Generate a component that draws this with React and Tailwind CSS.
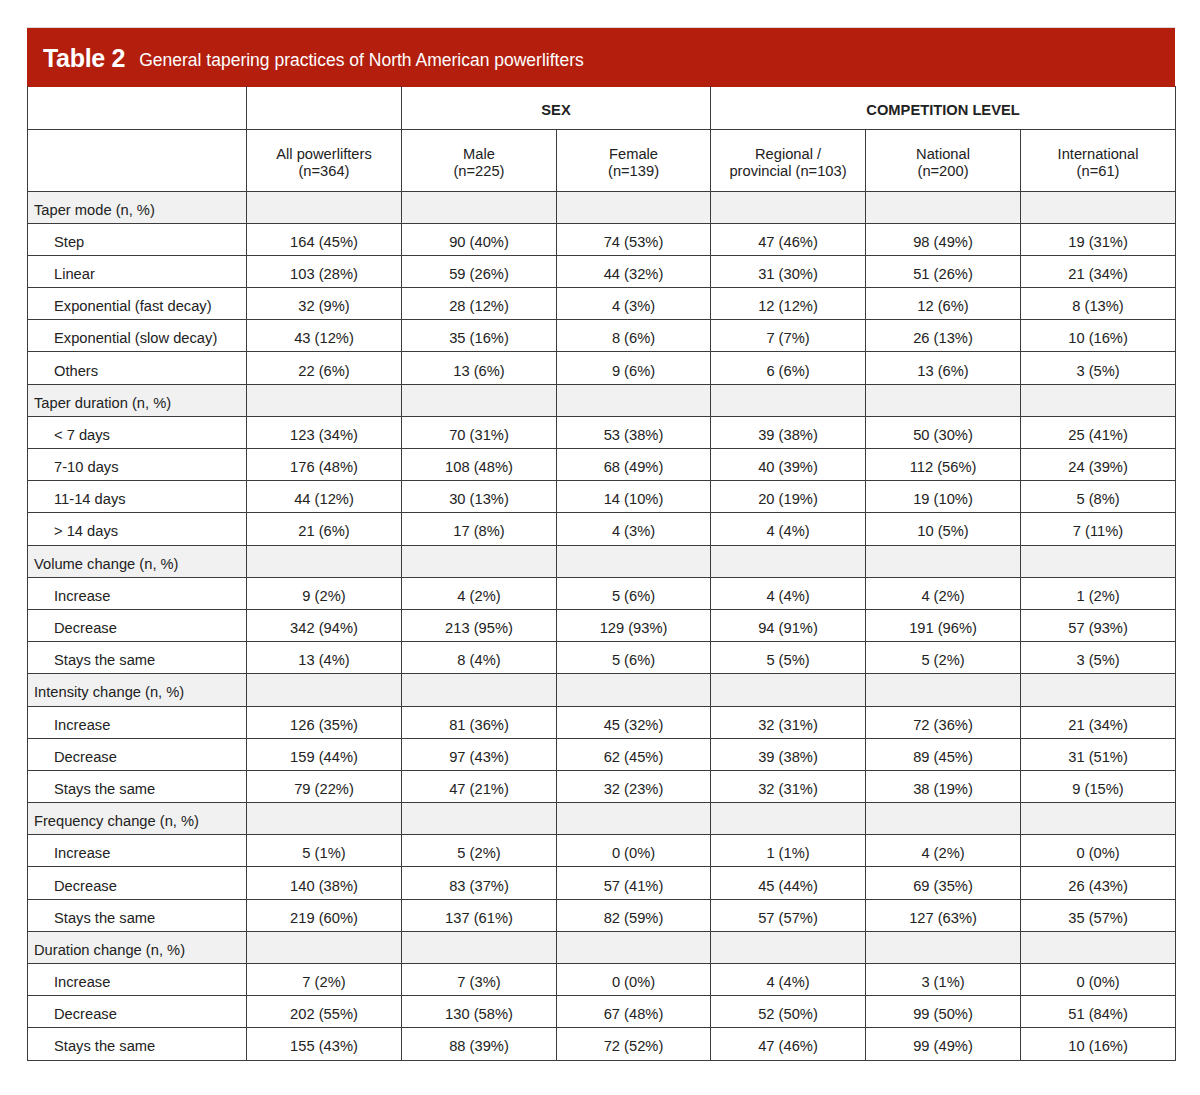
const groups = [
  {
    title: 'Taper mode (n, %)',
    rows: [
      ['Step', '164 (45%)', '90 (40%)', '74 (53%)', '47 (46%)', '98 (49%)', '19 (31%)'],
      ['Linear', '103 (28%)', '59 (26%)', '44 (32%)', '31 (30%)', '51 (26%)', '21 (34%)'],
      ['Exponential (fast decay)', '32 (9%)', '28 (12%)', '4 (3%)', '12 (12%)', '12 (6%)', '8 (13%)'],
      ['Exponential (slow decay)', '43 (12%)', '35 (16%)', '8 (6%)', '7 (7%)', '26 (13%)', '10 (16%)'],
      ['Others', '22 (6%)', '13 (6%)', '9 (6%)', '6 (6%)', '13 (6%)', '3 (5%)'],
    ],
  },
  {
    title: 'Taper duration (n, %)',
    rows: [
      ['< 7 days', '123 (34%)', '70 (31%)', '53 (38%)', '39 (38%)', '50 (30%)', '25 (41%)'],
      ['7-10 days', '176 (48%)', '108 (48%)', '68 (49%)', '40 (39%)', '112 (56%)', '24 (39%)'],
      ['11-14 days', '44 (12%)', '30 (13%)', '14 (10%)', '20 (19%)', '19 (10%)', '5 (8%)'],
      ['> 14 days', '21 (6%)', '17 (8%)', '4 (3%)', '4 (4%)', '10 (5%)', '7 (11%)'],
    ],
  },
  {
    title: 'Volume change (n, %)',
    rows: [
      ['Increase', '9 (2%)', '4 (2%)', '5 (6%)', '4 (4%)', '4 (2%)', '1 (2%)'],
      ['Decrease', '342 (94%)', '213 (95%)', '129 (93%)', '94 (91%)', '191 (96%)', '57 (93%)'],
      ['Stays the same', '13 (4%)', '8 (4%)', '5 (6%)', '5 (5%)', '5 (2%)', '3 (5%)'],
    ],
  },
  {
    title: 'Intensity change (n, %)',
    rows: [
      ['Increase', '126 (35%)', '81 (36%)', '45 (32%)', '32 (31%)', '72 (36%)', '21 (34%)'],
      ['Decrease', '159 (44%)', '97 (43%)', '62 (45%)', '39 (38%)', '89 (45%)', '31 (51%)'],
      ['Stays the same', '79 (22%)', '47 (21%)', '32 (23%)', '32 (31%)', '38 (19%)', '9 (15%)'],
    ],
  },
  {
    title: 'Frequency change (n, %)',
    rows: [
      ['Increase', '5 (1%)', '5 (2%)', '0 (0%)', '1 (1%)', '4 (2%)', '0 (0%)'],
      ['Decrease', '140 (38%)', '83 (37%)', '57 (41%)', '45 (44%)', '69 (35%)', '26 (43%)'],
      ['Stays the same', '219 (60%)', '137 (61%)', '82 (59%)', '57 (57%)', '127 (63%)', '35 (57%)'],
    ],
  },
  {
    title: 'Duration change (n, %)',
    rows: [
      ['Increase', '7 (2%)', '7 (3%)', '0 (0%)', '4 (4%)', '3 (1%)', '0 (0%)'],
      ['Decrease', '202 (55%)', '130 (58%)', '67 (48%)', '52 (50%)', '99 (50%)', '51 (84%)'],
      ['Stays the same', '155 (43%)', '88 (39%)', '72 (52%)', '47 (46%)', '99 (49%)', '10 (16%)'],
    ],
  },
]

const subHeads = [
  ['All powerlifters', '(n=364)'],
  ['Male', '(n=225)'],
  ['Female', '(n=139)'],
  ['Regional /', 'provincial (n=103)'],
  ['National', '(n=200)'],
  ['International', '(n=61)'],
]

const cell = 'border border-[#3c3c3c] p-0'

export default function App() {
  return (
    <div className="bg-white w-[1200px] h-[1095px] pt-[27px] pl-[27px] text-[#222] text-[14.7px]" style={{ fontFamily: '"Liberation Sans", Arial, sans-serif' }}>
      <div className="w-[1148px]">
        {/* title band */}
        <div className="bg-[#b31e0d] h-[60px] flex items-center pl-[16px] pt-[2px] text-white border-t border-[#d9d9d9]">
          <span className="text-[25px] font-bold tracking-[-0.3px]">Table 2</span>
          <span className="text-[17.5px] ml-[14px] mt-[4px]">General tapering practices of North American powerlifters</span>
        </div>

        <table className="border-collapse table-fixed w-[1148px] -mt-px">
          <colgroup>
            <col className="w-[219px]" />
            <col className="w-[155px]" />
            <col className="w-[155px]" />
            <col className="w-[154px]" />
            <col className="w-[155px]" />
            <col className="w-[155px]" />
            <col className="w-[155px]" />
          </colgroup>
          <thead>
            <tr className="h-[43px]">
              <th className={`${cell} border-t-0`} />
              <th className={`${cell} border-t-0`} />
              <th colSpan={2} className={`${cell} border-t-0 font-bold text-[14.7px] pt-[5px]`}>SEX</th>
              <th colSpan={3} className={`${cell} border-t-0 font-bold text-[14.7px] pt-[5px]`}>COMPETITION LEVEL</th>
            </tr>
            <tr className="h-[62px]">
              <th className={cell} />
              {subHeads.map(([a, b]) => (
                <th key={a} className={`${cell} font-normal leading-[17px] pt-[6px]`}>
                  <div>{a}</div>
                  <div>{b}</div>
                </th>
              ))}
            </tr>
          </thead>
          <tbody>
            {groups.map((g) => (
              <Group key={g.title} g={g} />
            ))}
          </tbody>
        </table>
      </div>
    </div>
  )
}

function Group({ g }) {
  return (
    <>
      <tr className="h-[32.2px] bg-[#f1f1f1]">
        <td className={`${cell} pl-[6px] pt-[5px]`}>{g.title}</td>
        {[1, 2, 3, 4, 5, 6].map((i) => (
          <td key={i} className={cell} />
        ))}
      </tr>
      {g.rows.map((r) => (
        <tr key={r[0]} className="h-[32.2px]">
          <td className={`${cell} pl-[26px] pt-[5px]`}>{r[0]}</td>
          {r.slice(1).map((v, i) => (
            <td key={i} className={`${cell} text-center pt-[5px]`}>{v}</td>
          ))}
        </tr>
      ))}
    </>
  )
}
